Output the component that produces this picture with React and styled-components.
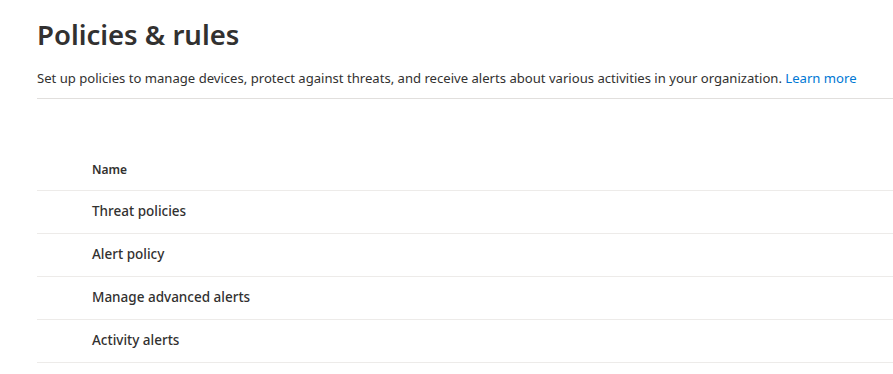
import React from 'react';
import styled, { createGlobalStyle } from 'styled-components';

const GlobalStyle = createGlobalStyle`
  body {
    margin: 0;
    background: #fff;
    font-family: 'Segoe UI', 'Noto Sans', 'Open Sans', sans-serif;
    color: #323130;
  }
`;

const Page = styled.div`
  padding: 15px 0 0 37px;
  overflow: hidden;
`;

const Title = styled.h1`
  margin: 0;
  font-size: 27.5px;
  font-weight: 600;
  line-height: 40px;
  color: #323130;
`;

const Description = styled.p`
  margin: 13px 0 0;
  font-size: 13.1px;
  line-height: 20px;
  padding-bottom: 10px;
  border-bottom: 1px solid #e1dfdd;
  white-space: nowrap;
`;

const Link = styled.a`
  color: #0078d4;
  text-decoration: none;
`;

const Table = styled.div`
  margin-top: 49px;
`;

const Row = styled.div`
  display: flex;
  align-items: center;
  height: 43px;
  padding-left: 55px;
  padding-bottom: ${props => (props.header ? '0' : '2px')};
  box-sizing: border-box;
  border-bottom: 1px solid #edebe9;
  font-size: ${props => (props.header ? '12px' : '13.5px')};
  font-weight: ${props => (props.header ? 600 : 500)};
  color: #323130;
`;

const rows = [
  'Threat policies',
  'Alert policy',
  'Manage advanced alerts',
  'Activity alerts',
];

export default function App() {
  return (
    <Page>
      <GlobalStyle />
      <Title>Policies &amp; rules</Title>
      <Description>
        Set up policies to manage devices, protect against threats, and receive alerts about various activities in your organization.{' '}
        <Link href="#">Learn more</Link>
      </Description>
      <Table>
        <Row header>Name</Row>
        {rows.map(name => (
          <Row key={name}>{name}</Row>
        ))}
      </Table>
    </Page>
  );
}
